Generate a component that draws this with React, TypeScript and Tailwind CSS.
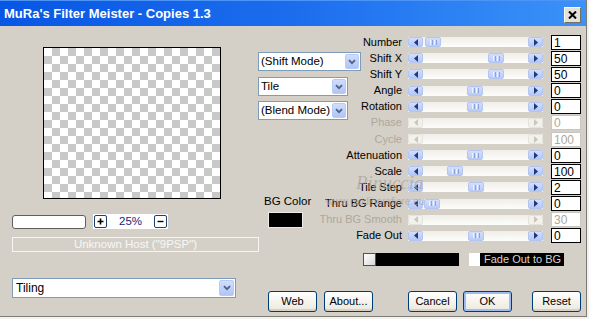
import React from "react";

type Row = { label: string; value: string; pos?: number; disabled?: boolean };

const rows: Row[] = [
  { label: "Number", value: "1", pos: 2 },
  { label: "Shift X", value: "50", pos: 65 },
  { label: "Shift Y", value: "50", pos: 65 },
  { label: "Angle", value: "0", pos: 44 },
  { label: "Rotation", value: "0", pos: 44 },
  { label: "Phase", value: "0", disabled: true },
  { label: "Cycle", value: "100", disabled: true },
  { label: "Attenuation", value: "0", pos: 44 },
  { label: "Scale", value: "100", pos: 24 },
  { label: "Tile Step", value: "2", pos: 45 },
  { label: "Thru BG Range", value: "0", pos: 1 },
  { label: "Thru BG Smooth", value: "30", disabled: true },
  { label: "Fade Out", value: "0", pos: 45 },
];

function ArrowBtn({ dir, disabled }: { dir: "l" | "r"; disabled?: boolean }) {
  const color = disabled ? "#c9c7ba" : "#1f3a78";
  return (
    <div
      className={
        "flex h-full w-[15px] shrink-0 items-center justify-center rounded-[2px] border " +
        (disabled
          ? "border-[#e6e4da] bg-[#f2f1eb]"
          : "border-[#b3c5f2] bg-gradient-to-b from-[#d3defd] to-[#b4c7f5]")
      }
    >
      <svg width="4" height="7" viewBox="0 0 4 7">
        {dir === "l" ? (
          <polygon points="4,0 0,3.5 4,7" fill={color} />
        ) : (
          <polygon points="0,0 4,3.5 0,7" fill={color} />
        )}
      </svg>
    </div>
  );
}

function Scroll({ pos, disabled }: { pos?: number; disabled?: boolean }) {
  return (
    <div className="ml-[6px] flex h-[10px] w-[135px] bg-gradient-to-b from-[#efeee7] to-[#fdfdfb]">
      <ArrowBtn dir="l" disabled={disabled} />
      <div className="flex flex-1">
        {!disabled && (
          <div
            className="flex h-full w-[16px] items-center justify-center gap-[1px] rounded-[2px] border border-[#b3c5f2] bg-gradient-to-b from-[#d3defd] to-[#b9cbf6]"
            style={{ marginLeft: pos }}
          >
            <div className="h-[5px] w-[1px] bg-[#eef3ff]" />
            <div className="h-[5px] w-[1px] bg-[#8aa3dd]" />
            <div className="h-[5px] w-[1px] bg-[#eef3ff]" />
            <div className="h-[5px] w-[1px] bg-[#8aa3dd]" />
          </div>
        )}
      </div>
      <ArrowBtn dir="r" disabled={disabled} />
    </div>
  );
}

function Chevron() {
  return (
    <svg width="8" height="6" viewBox="0 0 8 6">
      <path d="M1 1.2 L4 4.2 L7 1.2" stroke="#4d6185" strokeWidth="1.8" fill="none" />
    </svg>
  );
}

function Combo({ text, w }: { text: string; w: string }) {
  return (
    <div className={"flex h-[19px] items-center border border-[#7f9db9] bg-white " + w}>
      <span className="flex-1 whitespace-nowrap pl-[2px] text-[11.5px] leading-none text-black">{text}</span>
      <div className="mr-[1px] flex h-[15px] w-[14px] items-center justify-center rounded-[2px] border border-[#b8cbf6] bg-gradient-to-b from-[#d0ddfd] to-[#b1c5f5]">
        <Chevron />
      </div>
    </div>
  );
}

function Btn({ label, ok }: { label: string; ok?: boolean }) {
  return (
    <div
      className={
        "flex h-[21px] w-[49px] items-center justify-center rounded-[3px] border border-[#003c74] bg-gradient-to-b from-[#ffffff] to-[#ebe8dc] text-[11px] text-black " +
        (ok ? "shadow-[inset_0_0_0_2px_#9fbcf0]" : "shadow-[inset_0_-2px_0_#d6d0c5]")
      }
    >
      {label}
    </div>
  );
}

export default function App() {
  return (
    <div className="h-[319px] w-[589px] bg-[#f3f2ec] font-['Liberation_Sans',Arial,sans-serif] text-black">
      <div className="flex h-[317px] w-[587px] flex-col border-b border-r border-[#7b7a74] bg-[#d4d0c8]">
        {/* Title bar */}
        <div className="flex h-[26px] shrink-0 items-center bg-gradient-to-r from-[#0856e4] via-[#1c6ded] to-[#3b92f8] pl-[4px] pr-[5px] shadow-[inset_0_1px_0_#4c94f5]">
          <span className="flex-1 pt-[1px] text-[13px] font-bold text-white">MuRa's Filter Meister - Copies 1.3</span>
          <div className="mt-[3px] flex h-[16px] w-[17px] items-center justify-center border border-b-[#716f64] border-l-white border-r-[#716f64] border-t-white bg-[#e4e1d8]">
            <svg width="9" height="8" viewBox="0 0 9 8">
              <path d="M1 0.5 L8 7.5 M8 0.5 L1 7.5" stroke="#000" strokeWidth="2" />
            </svg>
          </div>
        </div>

        {/* Body */}
        <div className="flex flex-1">
          {/* Left column */}
          <div className="flex w-[258px] shrink-0 flex-col">
            <div className="ml-[43px] mt-[21px] h-[152px] w-[178px] border border-black bg-[repeating-conic-gradient(#c9c9c9_0%_25%,#ffffff_0%_50%)] bg-[length:16px_16px]" />
            <div className="ml-[12px] mt-[15px] flex items-start">
              <div className="mt-[1px] h-[14px] w-[74px] rounded-[3px] border border-[#5f5f5f] bg-white" />
              <div className="ml-[7px] flex h-[15px] w-[75px] items-center bg-white pl-[1px] pr-[1px]">
                <div className="flex h-[13px] w-[13px] items-center justify-center rounded-[2px] border border-[#1f3f6e] bg-white">
                  <svg width="7" height="7" viewBox="0 0 7 7">
                    <path d="M3.5 0.5 V6.5 M0.5 3.5 H6.5" stroke="#000" strokeWidth="1.6" />
                  </svg>
                </div>
                <span className="flex-1 text-center text-[11.5px] leading-none text-[#1b1b7c]">25%</span>
                <div className="flex h-[13px] w-[13px] items-center justify-center rounded-[2px] border border-[#1f3f6e] bg-white">
                  <svg width="7" height="7" viewBox="0 0 7 7">
                    <path d="M0.5 3.5 H6.5" stroke="#000" strokeWidth="1.4" />
                  </svg>
                </div>
              </div>
            </div>
            <div className="ml-[12px] mt-[8px] flex h-[15px] w-[247px] shrink-0 items-center justify-center border border-[#f6f5f1] text-[11.5px] leading-none text-[#f7f7f5]">
              Unknown Host ("9PSP")
            </div>
            <div className="ml-[12px] mt-[26px]">
              <div className="flex h-[20px] w-[224px] items-center border border-[#7f9db9] bg-white">
                <span className="flex-1 pl-[3px] text-[12px] leading-none">Tiling</span>
                <div className="mr-[1px] flex h-[16px] w-[15px] items-center justify-center rounded-[2px] border border-[#b8cbf6] bg-gradient-to-b from-[#d0ddfd] to-[#b1c5f5]">
                  <Chevron />
                </div>
              </div>
            </div>
          </div>

          {/* Right area */}
          <div className="relative flex flex-1 flex-col">
            <div className="flex">
              {/* Dropdown column */}
              <div className="flex w-[104px] shrink-0 flex-col pt-[26px]">
                <Combo text="(Shift Mode)" w="w-[103px]" />
                <div className="mt-[6px]">
                  <Combo text="Tile" w="w-[90px]" />
                </div>
                <div className="mt-[5px]">
                  <Combo text="(Blend Mode)" w="w-[90px]" />
                </div>
                <div className="ml-[6px] mt-[74px] text-[11.5px] leading-[14px]">BG Color</div>
                <div className="ml-[10px] mt-[4px] h-[16px] w-[35px] border border-[#ecebe6] bg-black" />
              </div>
              {/* Rows */}
              <div className="flex flex-col pt-[8px]">
                {rows.map((r) => (
                  <div key={r.label} className="flex h-[16.17px] items-center">
                    <div
                      className={
                        "flex w-[40px] justify-end whitespace-nowrap text-[11px] leading-none " +
                        (r.disabled ? "text-[#aca899]" : "text-black")
                      }
                    >
                      {r.label}
                    </div>
                    <Scroll pos={r.pos} disabled={r.disabled} />
                    <div
                      className={
                        "ml-[8px] h-[15px] w-[30px] border bg-white pl-[2px] text-[12px] leading-[14px] " +
                        (r.disabled ? "border-[#c9c7bd] text-[#aca899]" : "border-black text-black")
                      }
                    >
                      {r.value}
                    </div>
                  </div>
                ))}
              </div>
            </div>

            {/* Fade out bar */}
            <div className="ml-[105px] mt-[9px] flex h-[13px] items-stretch">
              <div className="w-[13px] border border-[#2a5a8c] bg-gradient-to-br from-white to-[#d8d8d8]" />
              <div className="w-[83px] bg-black" />
              <div className="ml-[10px] w-[11px] bg-white" />
              <div className="flex w-[84px] items-center whitespace-nowrap bg-black pl-[4px] text-[11px] leading-none text-[#d4d4d4]">
                Fade Out to BG
              </div>
            </div>

            {/* Buttons */}
            <div className="ml-[10px] mt-[25px] flex">
              <Btn label="Web" />
              <div className="ml-[7px]">
                <Btn label="About..." />
              </div>
              <div className="ml-[35px]">
                <Btn label="Cancel" />
              </div>
              <div className="ml-[6px]">
                <Btn label="OK" ok />
              </div>
              <div className="ml-[20px]">
                <Btn label="Reset" />
              </div>
            </div>

            {/* Watermark overlay */}
            <div className="pointer-events-none absolute left-[98px] top-[147px] font-['Liberation_Serif',serif] text-[19px] italic leading-none text-[#a9a59c] opacity-70">
              Pinuccia
            </div>
            <div className="pointer-events-none absolute left-[68px] top-[171px] text-[10px] leading-none text-[#a9a59c] opacity-70">
              www.guidinorafiore.eu
            </div>
          </div>
        </div>
      </div>
    </div>
  );
}
